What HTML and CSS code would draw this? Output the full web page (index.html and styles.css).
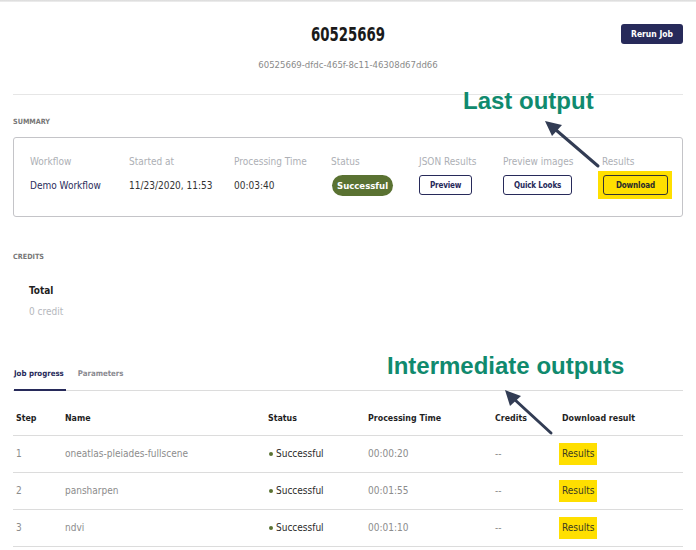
FILE: index.html
```html
<!DOCTYPE html>
<html>
<head>
<meta charset="utf-8">
<link rel="stylesheet" href="styles.css">
</head>
<body>
<div class="topline"></div>
<div class="page">
  <header class="header">
    <div></div>
    <h1 class="title">60525669</h1>
    <div class="actions"><button class="btn-primary">Rerun Job</button></div>
  </header>
  <div class="subtitle">60525669-dfdc-465f-8c11-46308d67dd66</div>
  <hr class="divider">

  <div class="section-label">SUMMARY</div>
  <div class="summary">
    <div class="s-label">Workflow</div>
    <div class="s-label">Started at</div>
    <div class="s-label">Processing Time</div>
    <div class="s-label">Status</div>
    <div class="s-label">JSON Results</div>
    <div class="s-label">Preview images</div>
    <div class="s-label">Results</div>
    <div class="s-value link">Demo Workflow</div>
    <div class="s-value">11/23/2020, 11:53</div>
    <div class="s-value">00:03:40</div>
    <div class="s-value"><span class="pill">Successful</span></div>
    <div class="s-value"><button class="btn-outline">Preview</button></div>
    <div class="s-value"><button class="btn-outline">Quick Looks</button></div>
    <div class="s-value"><span class="hl"><button class="btn-outline btn-yellow">Download</button></span></div>
  </div>

  <div class="section-label credits-label">CREDITS</div>
  <div class="credits">
    <div class="total">Total</div>
    <div class="credit-val">0 credit</div>
  </div>

  <nav class="tabs">
    <span class="tab active">Job progress</span>
    <span class="tab">Parameters</span>
  </nav>

  <table class="steps">
    <thead>
      <tr><th class="c1">Step</th><th class="c2">Name</th><th class="c3">Status</th><th class="c4">Processing Time</th><th class="c5">Credits</th><th class="c6">Download result</th></tr>
    </thead>
    <tbody>
      <tr><td>1</td><td>oneatlas-pleiades-fullscene</td><td class="st"><span class="dot"></span>Successful</td><td>00:00:20</td><td>--</td><td><span class="res">Results</span></td></tr>
      <tr><td>2</td><td>pansharpen</td><td class="st"><span class="dot"></span>Successful</td><td>00:01:55</td><td>--</td><td><span class="res">Results</span></td></tr>
      <tr><td>3</td><td>ndvi</td><td class="st"><span class="dot"></span>Successful</td><td>00:01:10</td><td>--</td><td><span class="res">Results</span></td></tr>
    </tbody>
  </table>
</div>

<div class="note note-last">Last output</div>
<div class="note note-inter">Intermediate outputs</div>
<svg class="arrows" width="696" height="550" viewBox="0 0 696 550">
  <g stroke="#323c54" stroke-width="3" stroke-linecap="round">
    <line x1="598" y1="166" x2="556" y2="130"/>
    <line x1="551" y1="433" x2="514" y2="399"/>
  </g>
  <g fill="#323c54">
    <polygon points="545,121 562,125 552,136"/>
    <polygon points="505,390 521,396 510,406"/>
  </g>
</svg>
</body>
</html>
```
FILE: styles.css
```css
* { box-sizing: border-box; }
html, body { margin: 0; padding: 0; background: #fff; }
body {
  width: 696px;
  height: 550px;
  overflow: hidden;
  position: relative;
  font-family: "DejaVu Sans Condensed", "DejaVu Sans", sans-serif;
  font-stretch: condensed;
  color: #333;
}
.topline { height: 2px; background: linear-gradient(#d9d9d9, #f0f0f0); }
.page { padding: 0 13px; }

.header {
  display: grid;
  grid-template-columns: 1fr auto 1fr;
  align-items: start;
  padding-top: 20px;
}
.title {
  margin: 0;
  font-size: 20px;
  line-height: 24px;
  font-weight: bold;
  color: #1a1a1a;
  transform: scaleX(0.74);
}
.actions { display: flex; justify-content: flex-end; }
.btn-primary {
  margin-top: 2px;
  height: 20px;
  width: 62px;
  padding: 0;
  border: none;
  border-radius: 3px;
  background: #272a5a;
  color: #fff;
  font-family: inherit;
  font-weight: bold;
  font-size: 8.5px;
}
.subtitle {
  margin-top: 12px;
  text-align: center;
  font-size: 9.5px;
  line-height: 14px;
  color: #8a8a8a;
}
.divider {
  margin: 22px 0 0 0;
  border: none;
  border-top: 1px solid #e6e6e6;
}
.section-label {
  margin-top: 22px;
  font-size: 7.2px;
  line-height: 10px;
  font-weight: bold;
  color: #777;
}

.summary {
  margin-top: 10px;
  border: 1px solid #c4c4c8;
  border-radius: 3px;
  height: 80px;
  padding: 17px 0 0 16px;
  display: grid;
  grid-template-columns: 99px 105px 97px 88px 84px 99px 1fr;
  grid-template-rows: 14px 21px;
  row-gap: 6px;
}
.s-label {
  font-size: 10px;
  line-height: 14px;
  color: #adafb5;
}
.s-value {
  font-size: 10px;
  line-height: 21px;
  color: #333;
}
.s-value.link { color: #2b2d5c; }
.pill {
  display: inline-block;
  height: 21px;
  line-height: 21px;
  padding: 0 5px;
  border-radius: 11px;
  background: #5a7232;
  color: #fff;
  font-weight: bold;
  font-size: 9.5px;
  margin-left: 1px;
}
.btn-outline {
  display: inline-block;
  vertical-align: top;
  height: 20px;
  padding: 0 10px;
  border: 1px solid #272a5a;
  border-radius: 3px;
  background: #fff;
  color: #272a5a;
  font-family: inherit;
  font-weight: bold;
  font-size: 8px;
  letter-spacing: -0.15px;
}
.hl {
  display: inline-block;
  vertical-align: top;
  margin: -4px 0 0 -4px;
  padding: 4px 4px 3px 5px;
  background: #ffdf00;
}
.btn-yellow {
  background: #ffdf00;
  color: #2a2a2a;
  border-color: #333;
  padding: 0 12px;
}

.credits-label { margin-top: 35px; }
.credits { padding: 22px 0 0 16px; }
.total {
  font-size: 10px;
  line-height: 14px;
  font-weight: bold;
  color: #1f1f1f;
}
.credit-val {
  margin-top: 7px;
  font-size: 10px;
  line-height: 14px;
  color: #b5b7bd;
}

.tabs {
  margin-top: 49px;
  display: flex;
  gap: 12px;
  border-bottom: 1px solid #dcdcdc;
  padding-left: 1px;
}
.tab {
  font-size: 7.8px;
  font-weight: bold;
  line-height: 12px;
  padding-bottom: 9px;
  color: #8a8a90;
}
.tab.active {
  color: #272a5a;
  border-bottom: 2px solid #272a5a;
  margin-bottom: -1px;
  padding-right: 2px;
}

.steps {
  width: 100%;
  border-collapse: collapse;
  font-size: 10px;
}
.steps th {
  text-align: left;
  font-weight: bold;
  font-size: 8.8px;
  color: #1f1f1f;
  padding: 21px 0 10px 3px;
  line-height: 13px;
  border-bottom: 1px solid #dcdcdc;
}
.c1 { width: 49px; }
.c2 { width: 203px; }
.c3 { width: 100px; }
.c4 { width: 127px; }
.c5 { width: 67px; }
.steps td {
  height: 37px;
  padding: 0 0 0 3px;
  color: #8c8c8c;
  border-bottom: 1px solid #dcdcdc;
  line-height: 14px;
}
.steps td.st { color: #2a2a2a; }
.dot {
  display: inline-block;
  width: 4px;
  height: 4px;
  border-radius: 50%;
  background: #5a7232;
  margin: 0 3px 1px 1px;
  vertical-align: middle;
}
.res {
  display: inline-block;
  background: #ffdf00;
  color: #3a3a24;
  line-height: 22px;
  padding: 0 3px;
  margin-left: -3px;
}

.note {
  position: absolute;
  font-family: "Liberation Sans", Arial, sans-serif;
  font-stretch: normal;
  font-weight: bold;
  font-size: 24px;
  color: #108a6e;
  line-height: 26px;
}
.note-last { left: 463px; top: 88px; }
.note-inter { left: 387px; top: 353px; }
.arrows { position: absolute; left: 0; top: 0; pointer-events: none; }
```
